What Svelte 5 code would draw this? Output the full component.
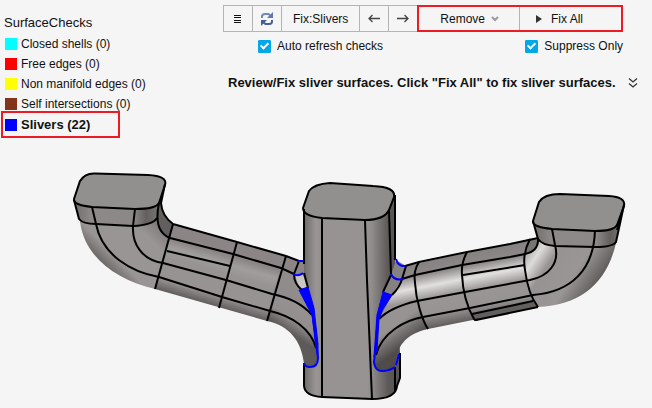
<script>
  const checks = [
    { label: "Closed shells", count: 0, color: "#00ffff" },
    { label: "Free edges", count: 0, color: "#ff0000" },
    { label: "Non manifold edges", count: 0, color: "#ffff00" },
    { label: "Self intersections", count: 0, color: "#843418" },
    { label: "Slivers", count: 22, color: "#0000ff" },
  ];

  let selected = "Slivers";
  let autoRefresh = true;
  let suppressOnly = true;

  // model edges, grouped by the body they belong to
  const leftEdges = [
    "M173 224L155 289", "M237 242L219 308", "M286 256L267 321",
    "M159 203Q153 231 170 238L233 254L281 268L294 274",
    "M167 251L230 266",
    "M135 209L133 226C132 244 142 260 163 263L226 280L272 294Q298 299 312 315",
    "M92 207L96 224C102 255 131 272 159 277L222 297L270 311C292 316 311 329 316 348",
    "M299 261L294 274Q294 284 302 290",
    "M304 273L308 288",
    "M173 224L237 242L286 256L299 261",
  ];

  const rightEdges = [
    "M419 262Q413 271 415 283C416 300 422 320 428 329",
    "M467 252Q461 263 462 275C463 296 470 312 474 319Q475 321 478 319",
    "M530 239Q522 254 525 270Q528 294 538 307",
    "M405 266L419 262L467 252L510 244L538 238",
    "M406 266L402 279L415 275L462 265L510 257L525 254Q539 251 538 238",
    "M463 275L525 265",
    "M379 319Q391 307 417 301L465 292L530 280C549 276 560 263 555 245L552 229",
    "M376 355C382 332 406 320 423 317L470 308L533 295C571 292 594 270 595 230",
    "M472 314L510 306L533 301",
    "M476 320L538 307",
    "M402 279Q400 287 392 295", "M391 275L383 292",
  ];

  const columnEdges = [
    "M304 209V264", "M322 218V397", "M365 220L367 280L372 399",
    "M389 211L391 274", "M395 195V260",
    "M304 363V386Q305 396 322 397L372 399Q396 399 397 386L400 378V353",
    "M395 367V391",
  ];
</script>

<main>
  <header>
    <section class="checks">
      <h1>SurfaceChecks</h1>
      <ul>
        {#each checks as check}
          <li>
            <button
              class="check"
              class:selected={selected === check.label}
              on:click={() => (selected = check.label)}
            >
              <span class="swatch" style="background: {check.color}"></span>
              {check.label} ({check.count})
            </button>
          </li>
        {/each}
      </ul>
    </section>

    <section class="tools">
      <div class="controls">
        <div class="toolbar">
          <button class="tool icon" aria-label="Menu">
            <svg width="14" height="14" viewBox="0 0 14 14">
              <path d="M3 3.5h7M3 5.5h7M3 8.5h7M3 10.5h7" stroke="#111" />
            </svg>
          </button>
          <button class="tool icon" aria-label="Refresh">
            <svg width="14" height="14" viewBox="0 0 14 14" fill="none">
              <path d="M2 6V4.500Q2 2 5 2H8.500L11 4" stroke="#7088ba" stroke-width="2" />
              <path d="M13 0v6H7z" fill="#5d78ae" />
              <path d="M12 8V9.500Q12 12 9 12H5.500L3 10" stroke="#465f98" stroke-width="2" />
              <path d="M1 14V8h6z" fill="#465f98" />
            </svg>
          </button>
          <button class="tool">Fix:Slivers</button>
          <button class="tool icon" aria-label="Previous">
            <svg width="14" height="14" viewBox="0 0 14 14" fill="none" stroke="#444" stroke-width="1.3">
              <path d="M13 6.500H2M5.500 3L2 6.500L5.500 10" />
            </svg>
          </button>
          <button class="tool icon" aria-label="Next">
            <svg width="14" height="14" viewBox="0 0 14 14" fill="none" stroke="#444" stroke-width="1.3">
              <path d="M1 6.500H12M8.500 3L12 6.500L8.500 10" />
            </svg>
          </button>
          <div class="marked">
            <button class="tool remove" aria-haspopup="menu">
              Remove
              <svg width="8" height="8" viewBox="0 0 8 8" fill="none" stroke="#999" stroke-width="2">
                <path d="M1 2L4 5L7 2" />
              </svg>
            </button>
            <button class="tool fix">
              <svg width="8" height="10" viewBox="0 0 8 10"><path d="M1 1L7 5L1 9z" fill="#333" /></svg>
              Fix All
            </button>
          </div>
        </div>

        <div class="options">
          <label><input type="checkbox" bind:checked={autoRefresh} />Auto refresh checks</label>
          <label><input type="checkbox" bind:checked={suppressOnly} />Suppress Only</label>
        </div>
      </div>

      <div class="hint">
        <p>Review/Fix sliver surfaces. Click "Fix All" to fix sliver surfaces.</p>
        <button class="expand" aria-label="Show more">
          <svg width="10" height="12" viewBox="0 0 10 12" fill="none" stroke="#333" stroke-width="1.3">
            <path d="M1 1.500L5 5L9 1.500M1 6.500L5 10L9 6.500" />
          </svg>
        </button>
      </div>
    </section>
  </header>

  <svg class="model" viewBox="0 160 652 248" role="img" aria-label="Surface model">
    <defs>
      <linearGradient id="pipeLeft" gradientUnits="userSpaceOnUse" x1="231" y1="240" x2="212" y2="306">
        <stop offset="0" stop-color="#8b8685" />
        <stop offset=".23" stop-color="#8b8685" />
        <stop offset=".35" stop-color="#a09e9d" />
        <stop offset=".5" stop-color="#969392" />
        <stop offset=".82" stop-color="#969392" />
        <stop offset="1" stop-color="#5d5a59" />
      </linearGradient>
      <linearGradient id="pipeRight" gradientUnits="userSpaceOnUse" x1="460" y1="253" x2="473" y2="321">
        <stop offset="0" stop-color="#858180" />
        <stop offset=".2" stop-color="#8c8988" />
        <stop offset=".38" stop-color="#e2e0df" />
        <stop offset=".56" stop-color="#999695" />
        <stop offset=".8" stop-color="#969392" />
        <stop offset="1" stop-color="#5d5a59" />
      </linearGradient>
      <linearGradient id="elbowLeft" gradientUnits="userSpaceOnUse" x1="105" y1="266" x2="161" y2="210">
        <stop offset="0" stop-color="#6b6867" />
        <stop offset=".18" stop-color="#989594" />
        <stop offset=".64" stop-color="#989594" />
        <stop offset=".8" stop-color="#858281" />
        <stop offset="1" stop-color="#5c5958" />
      </linearGradient>
      <linearGradient id="elbowRight" gradientUnits="userSpaceOnUse" x1="528" y1="246" x2="594" y2="290">
        <stop offset="0" stop-color="#a5a3a2" />
        <stop offset=".16" stop-color="#dedcdb" />
        <stop offset=".34" stop-color="#969392" />
        <stop offset=".68" stop-color="#999695" />
        <stop offset="1" stop-color="#5d5a59" />
      </linearGradient>
      <linearGradient id="column" gradientUnits="userSpaceOnUse" x1="303" y1="0" x2="400" y2="0">
        <stop offset="0" stop-color="#6a6766" />
        <stop offset=".13" stop-color="#989594" />
        <stop offset=".2" stop-color="#918e8d" />
        <stop offset=".21" stop-color="#979392" />
        <stop offset=".66" stop-color="#979392" />
        <stop offset=".71" stop-color="#8f8c8b" />
        <stop offset=".88" stop-color="#5b5857" />
        <stop offset="1" stop-color="#555251" />
      </linearGradient>
      <linearGradient id="collar" x1="0" y1="0" x2="1" y2="0">
        <stop offset="0" stop-color="#6f6c6b" />
        <stop offset=".2" stop-color="#8c8988" />
        <stop offset=".7" stop-color="#8c8887" />
        <stop offset=".85" stop-color="#625f5e" />
        <stop offset="1" stop-color="#787574" />
      </linearGradient>
      <linearGradient id="bendLeft" gradientUnits="userSpaceOnUse" x1="286" y1="330" x2="303" y2="304">
        <stop offset="0" stop-color="#5d5a59" />
        <stop offset=".4" stop-color="#918e8d" />
        <stop offset="1" stop-color="#969392" />
      </linearGradient>
      <linearGradient id="bendRight" gradientUnits="userSpaceOnUse" x1="387" y1="316" x2="407" y2="344">
        <stop offset="0" stop-color="#969392" />
        <stop offset=".35" stop-color="#969392" />
        <stop offset="1" stop-color="#4e4b4a" />
      </linearGradient>
    </defs>

    <!-- central column -->
    <path d="M303 208L323 184L373 186Q396 186 395 197V260L400 353V378L397 386Q396 399 372 399L322 397Q305 396 304 386z" fill="url(#column)" />
    <path class="cap" d="M303 208L309 191Q314 184 330 183L373 186Q396 187 394 197L389 210Q384 220 365 220L322 218Q303 216 303 208z" />

    <!-- left pipe -->
    <path d="M74 200L80 222C85 258 117 280 155 289L173 224Q162 216 161 203L165 184z" fill="url(#elbowLeft)" />
    <path d="M173 224L286 256L299 261L304 262V273L308 288L302 292L267 321L155 289z" fill="url(#pipeLeft)" />
    <path d="M272 294L294 274L302 290L314 311L318 358Q317 368 308 367L304 363C301 341 290 326 267 321z" fill="url(#bendLeft)" />
    <path d="M281 268L294 274L302 290L312 315Q298 299 272 294z" fill="#8f8c8b" />
    <path d="M295 275H303L308 288L300 290z" fill="#c9c6c4" />
    <path d="M74 200L79 219Q83 224 96 224L133 226Q153 225 157 218L159 203z" fill="url(#collar)" />
    <path d="M165 184L161 203Q162 216 173 224L170 238Q156 233 157 218L159 203z" fill="#625f5e" />
    <path class="cap" d="M74 199L80 181Q85 173 95 173.500L148 175Q168 176 165 185L159 203Q156 209 135 209L92 207Q73 205 74 199z" />

    <!-- right pipe -->
    <path d="M405 266L530 239Q520 260 525 275Q530 297 538 307L428 329L392 324L379 319L392 295z" fill="url(#pipeRight)" />
    <path d="M379 319Q391 307 417 301L428 329C405 334 396 347 395 367Q375 380 374 360z" fill="url(#bendRight)" />
    <path d="M391 275L396 260L406 266L402 279L392 295L383 292z" fill="#858281" />
    <path d="M472 314L533 301L538 307L476 320z" fill="#625f5e" />
    <path d="M530 239L538 238L534 222H620L616 243C607 282 582 305 538 307C524 283 520 259 530 239z" fill="url(#elbowRight)" />
    <path d="M530 239L538 238Q539 251 525 254z" fill="#777473" />
    <path d="M533 221L538 239Q542 245 555 246L595 247Q613 247 616 242L624 205z" fill="url(#collar)" />
    <path class="cap" d="M533 221L539 202Q544 194 560 194L609 196Q626 197 624 206L617 225Q614 231 595 231L552 229Q532 227 533 221z" />

    <g class="edges">
      {#each columnEdges as d}<path {d} />{/each}
      {#each leftEdges as d}<path {d} />{/each}
      {#each rightEdges as d}<path {d} />{/each}
      <path d="M74 200L79 219Q83 224 96 224L133 226Q153 225 157 218" />
      <path d="M165 184L161 203Q162 216 173 224" />
      <path d="M533 221L538 239Q542 245 555 246L595 247Q613 247 616 242L624 205L617 230" />
    </g>

    <!-- sliver surfaces -->
    <path class="sliver-fill" d="M299 290L308 287L314 308L318 344V358L316 348L312 315z" />
    <path class="sliver-fill" d="M383 292L392 295L383 309L379 319L377 350L374 357L377 315z" />
    <g class="slivers">
      <path d="M298 261H304M293 274Q298 277 303 273" />
      <path d="M312 310L316 340L318 358Q318 367 310 367Q305 367 304 363" />
      <path d="M396 259Q398 267 406 266M391 274Q394 281 403 279" />
      <path d="M378 315L376 345L374 362Q375 372 384 371Q391 370 395 367M396 365L399 354" />
    </g>
  </svg>
</main>

<style>
  :global(body) {
    margin: 0;
    background: #f5f5f5;
  }

  main {
    font-family: "Liberation Sans", Arial, sans-serif;
    font-size: 12px;
    color: #111;
  }

  header {
    display: grid;
    grid-template-columns: 223px 1fr;
    min-height: 160px;
  }

  button {
    font: inherit;
    color: inherit;
    background: none;
    border: none;
    padding: 0;
    cursor: pointer;
  }

  .checks {
    padding: 14px 0 0 1px;
  }

  h1 {
    margin: 0 0 3px 3px;
    font-size: 13px;
    font-weight: normal;
    line-height: 17px;
  }

  ul {
    list-style: none;
    margin: 0;
    padding: 0;
  }

  .check {
    display: flex;
    align-items: center;
    gap: 4px;
    height: 20px;
    padding: 0 4px;
    white-space: nowrap;
  }

  .check.selected {
    box-sizing: border-box;
    width: 119px;
    height: 27px;
    margin-top: -3px;
    padding: 0 2px;
    border: 2px solid #ed1c24;
    font-size: 13px;
    font-weight: bold;
  }

  .swatch {
    width: 12px;
    height: 12px;
  }

  .tools {
    padding-top: 5px;
  }

  .controls {
    width: fit-content;
  }

  .toolbar {
    display: flex;
    height: 27px;
  }

  .tool {
    display: flex;
    align-items: center;
    justify-content: center;
    padding: 0 11px;
    border: 1px solid #b4b4b4;
    border-right: none;
    white-space: nowrap;
  }

  .tool.icon {
    padding: 0 7px;
  }

  .marked {
    display: flex;
    border: 2px solid #ed1c24;
  }

  .marked .tool {
    border-width: 0;
  }

  .marked .remove {
    gap: 6px;
    padding: 0 20px 0 21px;
  }

  .marked .fix {
    gap: 8px;
    padding: 0 38px 0 15px;
    border-left-width: 1px;
  }

  .options {
    display: flex;
    justify-content: space-between;
    padding: 5px 0 0 35px;
  }

  label {
    display: flex;
    align-items: center;
    gap: 6px;
    height: 18px;
  }

  input {
    appearance: none;
    display: flex;
    justify-content: center;
    width: 13px;
    height: 13px;
    margin: 0;
    border: 1px solid #00a8e8;
    border-radius: 1px;
  }

  input:checked {
    background: #00a8e8;
  }

  input:checked::before {
    content: "";
    width: 3px;
    height: 6px;
    border: solid white;
    border-width: 0 2px 2px 0;
    transform: rotate(45deg);
  }

  .hint {
    display: flex;
    align-items: center;
    gap: 12px;
    padding: 19px 0 0 5px;
    font-size: 13px;
    font-weight: bold;
    white-space: nowrap;
  }

  p {
    margin: 0;
    line-height: 18px;
  }

  .expand {
    display: flex;
  }

  .model {
    display: block;
    width: 100%;
  }

  .cap {
    fill: #91908f;
    stroke: #000;
    stroke-width: 2;
  }

  .edges {
    fill: none;
    stroke: #000;
    stroke-width: 2;
    stroke-linejoin: round;
  }

  .sliver-fill {
    fill: #0000ff;
    stroke: #0000ff;
  }

  .slivers {
    fill: none;
    stroke: #0000ff;
    stroke-width: 2;
  }
</style>
